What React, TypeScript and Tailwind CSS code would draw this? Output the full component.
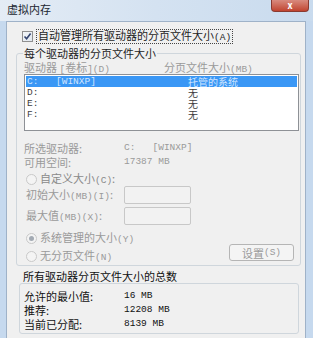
import React from 'react';

const cjk = '"Noto Sans CJK SC", "Noto Sans", sans-serif';
const mono = '"Liberation Mono", "Noto Sans CJK SC", monospace';

// SimSun-like ASCII bits inside the CJK labels
const M: React.FC<{ children: React.ReactNode; className?: string }> = ({ children, className = '' }) => (
  <span className={`font-['Liberation_Mono'] text-[9.5px] ${className}`}>{children}</span>
);

const Radio: React.FC<{ checked?: boolean }> = ({ checked }) => (
  <span className="w-[11px] h-[11px] rounded-full border border-[#c9c9c9] bg-[#f4f4f4] flex items-center justify-center shrink-0">
    {checked && <span className="w-[5px] h-[5px] rounded-full bg-[#a3aab3]" />}
  </span>
);

const drives = [
  { name: 'C:', label: '[WINXP]', size: '托管的系统', selected: true },
  { name: 'D:', label: '', size: '无' },
  { name: 'E:', label: '', size: '无' },
  { name: 'F:', label: '', size: '无' },
];

const App: React.FC = () => {
  return (
    <div
      className="w-[313px] h-[338px] overflow-hidden flex flex-col bg-[#c6d9ee] text-[11px] leading-[12px] text-[#1e1e1e]"
      style={{ fontFamily: cjk }}
    >
      {/* Title bar */}
      <div className="h-[21px] shrink-0 flex items-start justify-between pl-[7px] bg-gradient-to-r from-[#e4ecf5] via-[#d4e2f1] to-[#c9dbee]">
        <span className="mt-[3px] text-[11px] text-[#1b2530]">虚拟内存</span>
        <div className="w-[38px] h-[12px] mr-[4px] rounded-b-[4px] border border-t-0 border-[#8a3a30] bg-gradient-to-b from-[#d88a7e] to-[#c0432f] flex items-center justify-center text-white text-[9px] font-bold leading-[9px]">
          x
        </div>
      </div>

      {/* Frame + client area */}
      <div className="flex-1 flex pl-[6px] pr-[7px]">
        <div className="flex-1 bg-[#f0f0f0] border border-[#9fb2c8] border-b-0 flex flex-col">
          {/* Auto manage checkbox */}
          <div className="mt-[8px] ml-[15px] flex items-center gap-[3px] h-[13px]">
            <span className="w-[11px] h-[11px] border border-[#8f8f8f] bg-gradient-to-br from-[#f4f6f8] to-[#dfe6ee] flex items-center justify-center">
              <svg width="9" height="9" viewBox="0 0 9 9">
                <path d="M1.5 4.5 L3.6 6.8 L7.6 1.6" fill="none" stroke="#34446f" strokeWidth="1.6" />
              </svg>
            </span>
            <span className="border border-dotted border-[#444] px-[1px] leading-[11px]">
              自动管理所有驱动器的分页文件大小<M>(A)</M>
            </span>
          </div>

          {/* Per-drive group */}
          <div className="mt-[10px] ml-[9px] mr-[4px] border border-[#cfd6dc] rounded-[3px] flex flex-col">
            <div className="-mt-[7px] ml-[6px] px-[1px] w-fit bg-[#f0f0f0]">每个驱动器的分页文件大小</div>
            <div className="mt-[2px] pl-[7px] h-[11px] flex text-[#9a9a9a]">
              <span className="w-[140px]">
                驱动器 <M>[</M>卷标<M>](D)</M>
              </span>
              <span>
                分页文件大小<M>(MB)</M>
              </span>
            </div>
            <div className="mt-[2px] ml-[7px] mr-[1px] h-[57px] border border-[#8e9196] bg-white pt-[1px] px-[1px]" style={{ fontFamily: mono }}>
              {drives.map((d) => (
                <div
                  key={d.name}
                  className={`h-[11px] flex items-center text-[9.5px] leading-[11px] ${d.selected ? 'bg-[#3a97f5] text-[#cfe5ff]' : 'text-[#3c3c3c]'}`}
                >
                  <span className="w-[30px] pl-[1px]">{d.name}</span>
                  <span className="w-[132px]">{d.label}</span>
                  <span className="text-[10px] leading-[11px]" style={{ fontFamily: cjk }}>{d.size}</span>
                </div>
              ))}
            </div>

            <div className="mt-[10px] pl-[7px] flex flex-col text-[#9a9a9a]">
              <div className="h-[14px] flex items-center">
                <span className="w-[100px]">所选驱动器:</span>
                <M className="whitespace-pre">C:   [WINXP]</M>
              </div>
              <div className="h-[14px] flex items-center">
                <span className="w-[100px]">可用空间:</span>
                <M className="whitespace-pre">17387 MB</M>
              </div>
            </div>

            <div className="mt-[4px] pl-[9px] flex flex-col text-[#9a9a9a]">
              <div className="h-[12px] flex items-center gap-[3px]">
                <Radio />
                <span className="text-[#8a8a8a]">
                  自定义大小<M>(C)</M>:
                </span>
              </div>
              <div className="mt-[1px] h-[18px] flex items-center">
                <span className="w-[98px]">
                  初始大小<M>(MB)(I)</M>:
                </span>
                <span className="w-[67px] h-[18px] border border-[#c8c8c8] rounded-[2px] bg-[#f2f2f2]" />
              </div>
              <div className="mt-[3px] h-[18px] flex items-center">
                <span className="w-[98px]">
                  最大值<M>(MB)(X)</M>:
                </span>
                <span className="w-[67px] h-[18px] border border-[#c8c8c8] rounded-[2px] bg-[#f2f2f2]" />
              </div>
            </div>

            <div className="mt-[7px] pl-[9px] pr-[6px] pb-[3px] flex items-end justify-between text-[#9a9a9a]">
              <div className="flex flex-col gap-[6px]">
                <div className="h-[12px] flex items-center gap-[3px]">
                  <Radio checked />
                  <span>
                    系统管理的大小<M>(Y)</M>
                  </span>
                </div>
                <div className="h-[12px] flex items-center gap-[3px]">
                  <Radio />
                  <span>
                    无分页文件<M>(N)</M>
                  </span>
                </div>
              </div>
              <div className="mb-[1px] w-[65px] h-[17px] border border-[#b5b5b5] rounded-[3px] bg-[#f4f4f4] flex items-center justify-center">
                设置<M>(S)</M>
              </div>
            </div>
          </div>

          {/* Totals group */}
          <div className="mt-[2px] ml-[16px] h-[15px] flex items-center text-[#111]">所有驱动器分页文件大小的总数</div>
          <div className="ml-[12px] mr-[6px] h-[51px] border border-[#cfd6dc] rounded-[3px] pt-[5px] pl-[4px] flex flex-col text-[#111]">
            <div className="h-[14px] flex items-center">
              <span className="w-[100px]">允许的最小值:</span>
              <M className="whitespace-pre">16 MB</M>
            </div>
            <div className="h-[14px] flex items-center">
              <span className="w-[100px]">推荐:</span>
              <M className="whitespace-pre">12208 MB</M>
            </div>
            <div className="h-[14px] flex items-center">
              <span className="w-[100px]">当前已分配:</span>
              <M className="whitespace-pre">8139 MB</M>
            </div>
          </div>
        </div>
      </div>
    </div>
  );
};

export default App;
